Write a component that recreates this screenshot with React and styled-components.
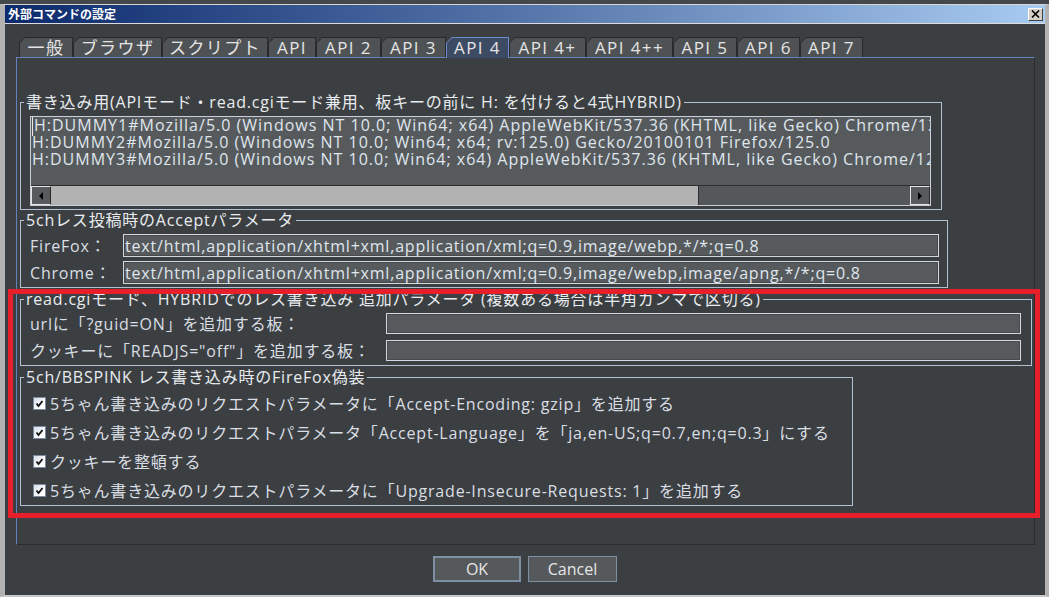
import styled, { createGlobalStyle } from "styled-components";

const GlobalStyle = createGlobalStyle`
  html, body {
    margin: 0;
    padding: 0;
  }
  body {
    width: 1049px;
    height: 597px;
    overflow: hidden;
    background: #45484a;
    font-family: "Open Sans", "Noto Sans CJK JP", sans-serif;
  }
`;

const Screen = styled.div`
  position: relative;
  width: 1049px;
  height: 597px;
  padding-top: 4px;
  box-sizing: border-box;
`;

const Window = styled.div`
  height: 593px;
  box-sizing: border-box;
  border-top: 1px solid #d6d6d6;
  border-left: 5px solid #b2b2b2;
  border-right: 4px solid #b2b2b2;
  border-bottom: 2px solid #c8c8c8;
  background: #3c3f41;
  display: flex;
  flex-direction: column;
`;

const TitleBar = styled.div`
  height: 18px;
  flex: none;
  display: flex;
  align-items: center;
  justify-content: space-between;
  padding: 0 2px 0 3px;
  background: linear-gradient(to right, #0c2a6c, #5675aa 50%, #a8cbf1);
  border-bottom: 1px solid #dcdcdc;
`;

const Title = styled.span`
  color: #ffffff;
  font-family: "Noto Sans CJK JP", sans-serif;
  font-weight: 700;
  font-size: 12px;
  line-height: 18px;
`;

const CloseButton = styled.div`
  width: 15px;
  height: 13px;
  box-sizing: border-box;
  background: #d4d0c8;
  border: 1px solid;
  border-color: #ffffff #404040 #404040 #ffffff;
  display: flex;
  align-items: center;
  justify-content: center;
`;

const TabRow = styled.div`
  display: flex;
  align-items: flex-end;
  height: 20px;
  margin: 13px 0 0 14px;
  position: relative;
  z-index: 1;
`;

const Tab = styled.div`
  width: ${(p) => p.$w}px;
  height: ${(p) => (p.$active ? 21 : 20)}px;
  margin-bottom: ${(p) => (p.$active ? -1 : 0)}px;
  box-sizing: border-box;
  padding: 1px 1px 0 1px;
  background: ${(p) => (p.$active ? "#6d8ccb" : "#27292b")};
  clip-path: polygon(6px 0, 100% 0, 100% 100%, 0 100%, 0 6px);
`;

const TabFace = styled.div`
  height: 100%;
  background: ${(p) => (p.$active ? "#3d4a63" : "#4f5254")};
  clip-path: polygon(5px 0, 100% 0, 100% 100%, 0 100%, 0 5px);
  color: #e4e4e4;
  font-size: 17px;
  line-height: 19px;
  text-align: center;
  letter-spacing: 1.4px;
  white-space: nowrap;
`;

const Panel = styled.div`
  width: 1019px;
  height: 488px;
  margin-left: 11px;
  box-sizing: border-box;
  border-top: 1px solid #6482c0;
  border-left: 1px solid #6482c0;
  border-right: 1px solid #2a2c2e;
  border-bottom: 1px solid #2a2c2e;
  padding: 35px 0 0 3px;
  display: flex;
  flex-direction: column;
  align-items: flex-start;
`;

const Group = styled.fieldset`
  width: ${(p) => p.$w}px;
  box-sizing: border-box;
  min-width: 0;
  margin: ${(p) => p.$gap || 0}px 0 0 0;
  padding: 0;
  border: 1px solid #b2c0d3;
`;

const Legend = styled.legend`
  margin-left: 3px;
  padding: 0 2px;
  font-size: 16px;
  font-weight: 400;
  line-height: 18px;
  letter-spacing: 0.8px;
  color: #e8ecf0;
`;

const GroupBody = styled.div`
  padding: ${(p) => p.$pad};
`;

const TextBox = styled.div`
  width: 901px;
  height: 90px;
  box-sizing: border-box;
  border: 1px solid #c6cfda;
  background: #575a5c;
  display: flex;
  flex-direction: column;
`;

const TextLines = styled.div`
  flex: 1;
  overflow: hidden;
  white-space: pre;
  padding-left: 1px;
  font-size: 16px;
  line-height: 17px;
  letter-spacing: 1px;
  color: #dfe6ee;
`;

const Caret = styled.span`
  border-left: 1px solid #e8e8e8;
  margin-right: 1px;
`;

const HScroll = styled.div`
  height: 20px;
  flex: none;
  display: flex;
  box-sizing: border-box;
  border-top: 1px solid #2c2e30;
  background: #55585a;
`;

const ScrollButton = styled.div`
  width: 20px;
  flex: none;
  box-sizing: border-box;
  border: 1px solid;
  border-color: #e4e4e4 #2a2a2a #e4e4e4 #e4e4e4;
  background: #585b5d;
  display: flex;
  align-items: center;
  justify-content: center;
`;

const Thumb = styled.div`
  width: ${(p) => p.$pct}%;
  background: #b2b2b2;
  border-right: 1px solid #2c2e30;
`;

const Track = styled.div`
  flex: 1;
`;

const FieldGrid = styled.div`
  display: grid;
  grid-template-columns: ${(p) => p.$label}px ${(p) => p.$input}px;
  row-gap: ${(p) => p.$gap}px;
  align-items: center;
`;

const Label = styled.span`
  font-size: 16px;
  line-height: 18px;
  letter-spacing: 0.8px;
  color: #d9dee4;
  white-space: nowrap;
`;

const Field = styled.input`
  height: ${(p) => p.$h}px;
  box-sizing: border-box;
  margin: 0;
  padding: 0 1px;
  border: 1px solid #d2d8e0;
  box-shadow: inset 0 0 0 1px #47494b;
  background: #575a5c;
  color: #dfe6ee;
  font-family: inherit;
  font-size: 16px;
  letter-spacing: 0.8px;
  outline: none;
`;

const CheckRow = styled.div`
  height: 29px;
  display: flex;
  align-items: center;
  gap: 4px;
`;

const CheckBox = styled.span`
  width: 13px;
  height: 13px;
  flex: none;
  box-sizing: border-box;
  border: 1px solid #7b8a9e;
  background: linear-gradient(135deg, #d4dde9, #ffffff 70%);
  display: flex;
  align-items: center;
  justify-content: center;
`;

const ButtonRow = styled.div`
  display: flex;
  justify-content: center;
  gap: 7px;
  margin-top: 11px;
`;

const Button = styled.button`
  width: ${(p) => p.$w}px;
  height: 26px;
  box-sizing: border-box;
  margin: 0;
  padding: 0;
  border: ${(p) => (p.$default ? 2 : 1)}px solid #7d8fa3;
  background: #56595b;
  color: #e6e6e6;
  font-family: inherit;
  font-size: 16px;
  cursor: pointer;
`;

const Highlight = styled.div`
  position: absolute;
  left: 8px;
  top: 289px;
  width: 1032px;
  height: 229px;
  box-sizing: border-box;
  border: 5px solid #e61f2a;
  pointer-events: none;
`;

const tabs = [
  ["一般", 54],
  ["ブラウザ", 89],
  ["スクリプト", 106],
  ["API", 48],
  ["API 2", 65],
  ["API 3", 65],
  ["API 4", 63],
  ["API 4+", 77],
  ["API 4++", 87],
  ["API 5", 64],
  ["API 6", 63],
  ["API 7", 63],
];

const lines = [
  "H:DUMMY1#Mozilla/5.0 (Windows NT 10.0; Win64; x64) AppleWebKit/537.36 (KHTML, like Gecko) Chrome/124.0.0.0 Safari/537.36",
  "H:DUMMY2#Mozilla/5.0 (Windows NT 10.0; Win64; x64; rv:125.0) Gecko/20100101 Firefox/125.0",
  "H:DUMMY3#Mozilla/5.0 (Windows NT 10.0; Win64; x64) AppleWebKit/537.36 (KHTML, like Gecko) Chrome/124.0.0.0 Safari/537.36",
];

const checks = [
  "5ちゃん書き込みのリクエストパラメータに「Accept-Encoding: gzip」を追加する",
  "5ちゃん書き込みのリクエストパラメータ「Accept-Language」を「ja,en-US;q=0.7,en;q=0.3」にする",
  "クッキーを整頓する",
  "5ちゃん書き込みのリクエストパラメータに「Upgrade-Insecure-Requests: 1」を追加する",
];

function Arrow({ dir }) {
  return (
    <svg width="6" height="8" viewBox="0 0 6 8">
      {dir === "left" ? <path d="M5 0 L1 4 L5 8 Z" fill="#000" /> : <path d="M1 0 L5 4 L1 8 Z" fill="#000" />}
    </svg>
  );
}

function App() {
  return (
    <Screen>
      <GlobalStyle />
      <Window>
        <TitleBar>
          <Title>外部コマンドの設定</Title>
          <CloseButton>
            <svg width="9" height="8" viewBox="0 0 9 8">
              <path d="M1 0.5 L8 7.5 M8 0.5 L1 7.5" stroke="#000" strokeWidth="1.6" />
            </svg>
          </CloseButton>
        </TitleBar>

        <TabRow>
          {tabs.map(([name, w]) => (
            <Tab key={name} $w={w} $active={name === "API 4"}>
              <TabFace $active={name === "API 4"}>{name}</TabFace>
            </Tab>
          ))}
        </TabRow>

        <Panel>
          <Group $w={922}>
            <Legend>書き込み用(APIモード・read.cgiモード兼用、板キーの前に H: を付けると4式HYBRID)</Legend>
            <GroupBody $pad="5px 0 3px 9px">
              <TextBox>
                <TextLines>
                  {lines.map((l, i) => (
                    <div key={i}>
                      {i === 0 && <Caret />}
                      {l}
                    </div>
                  ))}
                </TextLines>
                <HScroll>
                  <ScrollButton>
                    <Arrow dir="left" />
                  </ScrollButton>
                  <Thumb $pct={72} />
                  <Track />
                  <ScrollButton>
                    <Arrow dir="right" />
                  </ScrollButton>
                </HScroll>
              </TextBox>
            </GroupBody>
          </Group>

          <Group $w={928} $gap={1}>
            <Legend>5chレス投稿時のAcceptパラメータ</Legend>
            <GroupBody $pad="5px 0 3px 9px">
              <FieldGrid $label={93} $input={816} $gap={4}>
                <Label>FireFox：</Label>
                <Field $h={23} readOnly value="text/html,application/xhtml+xml,application/xml;q=0.9,image/webp,*/*;q=0.8" />
                <Label>Chrome：</Label>
                <Field
                  $h={23}
                  readOnly
                  value="text/html,application/xhtml+xml,application/xml;q=0.9,image/webp,image/apng,*/*;q=0.8"
                />
              </FieldGrid>
            </GroupBody>
          </Group>

          <Group $w={1012} $gap={2}>
            <Legend>read.cgiモード、HYBRIDでのレス書き込み 追加パラメータ (複数ある場合は半角カンマで区切る)</Legend>
            <GroupBody $pad="5px 0 4px 9px">
              <FieldGrid $label={356} $input={635} $gap={6}>
                <Label>urlに「?guid=ON」を追加する板：</Label>
                <Field $h={21} readOnly value="" />
                <Label>クッキーに「READJS="off"」を追加する板：</Label>
                <Field $h={21} readOnly value="" />
              </FieldGrid>
            </GroupBody>
          </Group>

          <Group $w={833} $gap={2}>
            <Legend>5ch/BBSPINK レス書き込み時のFireFox偽装</Legend>
            <GroupBody $pad="3px 0 0 12px">
              {checks.map((c) => (
                <CheckRow key={c}>
                  <CheckBox>
                    <svg width="9" height="9" viewBox="0 0 9 9">
                      <path d="M1.5 4.5 L3.5 7 L7.5 2" stroke="#111" strokeWidth="1.8" fill="none" />
                    </svg>
                  </CheckBox>
                  <Label>{c}</Label>
                </CheckRow>
              ))}
            </GroupBody>
          </Group>
        </Panel>

        <ButtonRow>
          <Button $w={88} $default>
            OK
          </Button>
          <Button $w={89}>Cancel</Button>
        </ButtonRow>
      </Window>
      <Highlight />
    </Screen>
  );
}

export default App;
